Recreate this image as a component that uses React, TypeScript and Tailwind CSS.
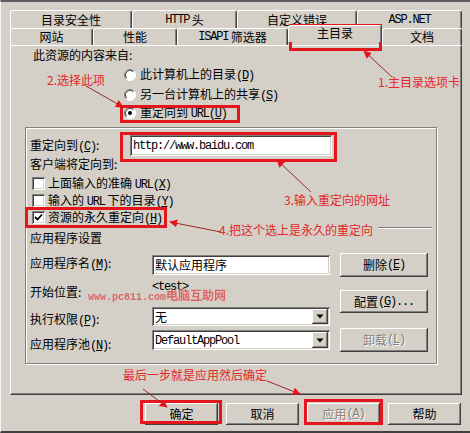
import React from 'react';

const raised =
  'bg-[#d4d0c8] shadow-[inset_-1px_-1px_0_#404040,inset_1px_1px_0_#ffffff,inset_-2px_-2px_0_#808080]';
const sunken =
  'bg-white shadow-[inset_1px_1px_0_#808080,inset_-1px_-1px_0_#ffffff,inset_2px_2px_0_#404040,inset_-2px_-2px_0_#d4d0c8]';
const mono = "font-['Liberation_Mono',monospace] text-[12px] tracking-[-1.2px]";
const tab =
  'h-full flex items-center justify-center rounded-t-[3px] border-t border-l border-r border-t-white border-l-white border-r-[#404040] shadow-[inset_-1px_0_0_#808080]';

function Key({ k }: { k: string }) {
  return (
    <span className={mono}>
      (<span className="underline">{k}</span>)
    </span>
  );
}

function Radio({ on }: { on?: boolean }) {
  return (
    <svg width="12" height="12" viewBox="0 0 12 12" className="shrink-0">
      <circle cx="6" cy="6" r="5.5" fill="#fff" />
      <path d="M9.9 2.1A5.5 5.5 0 0 0 2.1 9.9" stroke="#808080" fill="none" />
      <path d="M9.9 2.1A5.5 5.5 0 0 1 2.1 9.9" stroke="#ffffff" fill="none" />
      <path d="M9.2 2.8A4.5 4.5 0 0 0 2.8 9.2" stroke="#404040" fill="none" />
      {on && <circle cx="6" cy="6" r="2" fill="#000" />}
    </svg>
  );
}

function Check({ on }: { on?: boolean }) {
  return (
    <div className={`w-[13px] h-[13px] shrink-0 ${sunken} flex items-center justify-center`}>
      {on && (
        <svg width="9" height="9" viewBox="0 0 9 9">
          <path d="M1 4 L3.5 6.5 L8 1.5" stroke="#000" strokeWidth="1.8" fill="none" />
        </svg>
      )}
    </div>
  );
}

function Select({ children, h }: { children: React.ReactNode; h: string }) {
  return (
    <div className={`${h} w-[178px] ${sunken} flex items-center pl-[3px] pr-[2px]`}>
      <div className="flex-1">{children}</div>
      <div className={`w-[16px] h-[calc(100%-4px)] ${raised} flex items-center justify-center`}>
        <svg width="8" height="5" viewBox="0 0 8 5">
          <path d="M0.5 0.5 H7.5 L4 4.5z" fill="#000" />
        </svg>
      </div>
    </div>
  );
}

export default function App() {
  return (
    <div className="relative w-[470px] h-[433px] overflow-hidden bg-[#d4d0c8] font-['Noto_Sans_CJK_SC','Noto_Sans',sans-serif] text-[12px] leading-[14px] text-black">
      <div className="h-full border-t-2 border-t-[#5c5c5c] border-b-2 border-b-[#404040] border-l border-l-[#f4f4f4] pl-[9px] pr-[8px] pt-[8px]">
        {/* back tab row */}
        <div className="flex h-[18px]">
          <div className={`${tab} w-[122px]`}>目录安全性</div>
          <div className={`${tab} w-[105px]`}>
            <span className={mono}>HTTP</span>&nbsp;头
          </div>
          <div className={`${tab} w-[120px]`}>自定义错误</div>
          <div className={`${tab} w-[105px]`}>
            <span className={mono}>ASP.NET</span>
          </div>
        </div>
        {/* front tab row */}
        <div className="flex h-[17px] items-start">
          <div className={`${tab} w-[83px]`}>网站</div>
          <div className={`${tab} w-[84px]`}>性能</div>
          <div className={`${tab} w-[111px]`}>
            <span className={mono}>ISAPI</span>&nbsp;筛选器
          </div>
          <div className={`${tab} relative z-10 -mt-[3px] h-[22px] w-[94px] bg-[#d4d0c8] pb-[3px]`}>主目录</div>
          <div className={`${tab} w-[80px]`}>文档</div>
        </div>

        {/* panel */}
        <div className="h-[350px] border border-t-white border-l-white border-r-[#404040] border-b-[#404040] shadow-[inset_-1px_-1px_0_#808080]">
          <div className="ml-[22px] mt-[2px]">此资源的内容来自:</div>
          <div className="ml-[113px] mt-[4px] flex h-[18px] items-center gap-[4px]">
            <Radio />
            <span>
              此计算机上的目录<Key k="D" />
            </span>
          </div>
          <div className="ml-[113px] mt-[2px] flex h-[18px] items-center gap-[4px]">
            <Radio />
            <span>
              另一台计算机上的共享<Key k="S" />
            </span>
          </div>
          <div className="ml-[113px] flex h-[18px] items-center gap-[4px]">
            <Radio on />
            <span>
              重定向到&nbsp;<span className={mono}>URL</span>
              <Key k="U" />
            </span>
          </div>

          {/* redirect frame */}
          <div className="ml-[14px] mt-[5px] h-[237px] w-[412px] border border-[#808080] shadow-[inset_1px_1px_0_#ffffff,1px_1px_0_#ffffff]">
            <div className="mt-[7px] flex h-[21px] items-center">
              <div className="w-[104px] pl-[4px]">
                重定向到<Key k="C" />:
              </div>
              <div className={`h-[21px] w-[202px] ${sunken} flex items-center pl-[3px]`}>
                <span className={mono}>http://www.baidu.com</span>
              </div>
            </div>
            <div className="mt-[1px] pl-[4px]">客户端将定向到:</div>
            <div className="mt-[4px] flex h-[17px] items-center gap-[3px] pl-[6px]">
              <Check />
              <span>
                上面输入的准确&nbsp;<span className={mono}>URL</span>
                <Key k="X" />
              </span>
            </div>
            <div className="flex h-[17px] items-center gap-[3px] pl-[6px]">
              <Check />
              <span>
                输入的&nbsp;<span className={mono}>URL</span>&nbsp;下的目录<Key k="Y" />
              </span>
            </div>
            <div className="flex h-[17px] items-center gap-[3px] pl-[6px]">
              <Check on />
              <span>
                资源的永久重定向<Key k="H" />
              </span>
            </div>
            <div className="mt-[1px] ml-[352px] h-[2px] w-[54px] border-t border-b border-t-[#808080] border-b-white" />
            <div className="mt-[2px] pl-[4px]">应用程序设置</div>

            <div className="flex">
              <div className="flex w-[126px] flex-col pl-[4px]">
                <div className="mt-[11px]">
                  应用程序名<Key k="M" />:
                </div>
                <div className="mt-[13px]">开始位置:</div>
                <div className="mt-[13px]">
                  执行权限<Key k="P" />:
                </div>
                <div className="mt-[9px]">
                  应用程序池<Key k="N" />:
                </div>
              </div>
              <div className="flex w-[178px] flex-col">
                <div className={`mt-[10px] h-[20px] w-[178px] ${sunken} flex items-center pl-[3px]`}>默认应用程序</div>
                <div className={`mt-[5px] h-[14px] ${mono}`}>&lt;test&gt;</div>
                <div className="mt-[13px]">
                  <Select h="h-[19px]">无</Select>
                </div>
                <div className="mt-[4px]">
                  <Select h="h-[20px]">
                    <span className={mono}>DefaultAppPool</span>
                  </Select>
                </div>
              </div>
              <div className="ml-[10px] flex w-[88px] flex-col">
                <div className={`mt-[8px] h-[24px] ${raised} flex items-center justify-center`}>
                  删除<Key k="E" />
                </div>
                <div className={`mt-[13px] h-[23px] ${raised} flex items-center justify-center`}>
                  配置<Key k="G" />
                  <span className={mono}>...</span>
                </div>
                <div
                  className={`mt-[15px] h-[24px] ${raised} flex items-center justify-center text-[#808080] [text-shadow:1px_1px_0_#ffffff]`}
                >
                  卸载<Key k="L" />
                </div>
              </div>
            </div>
          </div>
        </div>

        {/* dialog buttons */}
        <div className="ml-[135px] mt-[8px] flex gap-[8px]">
          <div className={`h-[22px] w-[73px] ${raised} flex items-center justify-center`}>确定</div>
          <div className={`h-[22px] w-[73px] ${raised} flex items-center justify-center`}>取消</div>
          <div
            className={`h-[22px] w-[73px] ${raised} flex items-center justify-center text-[#808080] [text-shadow:1px_1px_0_#ffffff]`}
          >
            应用<Key k="A" />
          </div>
          <div className={`h-[22px] w-[73px] ${raised} flex items-center justify-center`}>帮助</div>
        </div>
      </div>

      {/* annotations */}
      <div className="pointer-events-none absolute inset-0 text-[12px] leading-[14px] text-[#e5252a]">
        <div className="absolute left-[289px] top-[24px] h-[27px] w-[93px] border-[3px] border-[#e3161b]" />
        <div className="absolute left-[120px] top-[105px] h-[18px] w-[120px] border-[3px] border-[#e3161b]" />
        <div className="absolute left-[120px] top-[132px] h-[30px] w-[217px] border-[3px] border-[#e3161b]" />
        <div className="absolute left-[25px] top-[207px] h-[21px] w-[142px] border-[3px] border-[#e3161b]" />
        <div className="absolute left-[140px] top-[400px] h-[24px] w-[82px] border-[3px] border-[#e3161b]" />
        <div className="absolute left-[304px] top-[399px] h-[26px] w-[79px] border-[3px] border-[#e3161b]" />

        <div className="absolute left-[378px] top-[75px]">1.主目录选项卡</div>
        <div className="absolute left-[47px] top-[73px]">2.选择此项</div>
        <div className="absolute left-[284px] top-[193px]">3.输入重定向的网址</div>
        <div className="absolute left-[219px] top-[223px]">4.把这个选上是永久的重定向</div>
        <div className="absolute left-[123px] top-[368px]">最后一步就是应用然后确定</div>
        <div className="absolute left-[88px] top-[288px] font-bold text-[#e04a4a] opacity-80">
          <span className="font-['Liberation_Mono',monospace] text-[10px]">www.pc811.com</span>电脑互助网
        </div>

        <svg className="absolute inset-0" width="470" height="433" viewBox="0 0 470 433">
          <defs>
            <marker id="ah" viewBox="0 0 10 10" refX="9" refY="5" markerWidth="8" markerHeight="8" orient="auto">
              <path d="M0 0L10 5L0 10z" fill="#e3161b" />
            </marker>
          </defs>
          <g stroke="#9a2a2a" strokeWidth="1" fill="none">
            <line x1="392" y1="77" x2="364" y2="51" markerEnd="url(#ah)" />
            <line x1="86" y1="86" x2="123" y2="107" markerEnd="url(#ah)" />
            <line x1="311" y1="192" x2="277" y2="160" markerEnd="url(#ah)" />
            <line x1="221" y1="232" x2="170" y2="222" markerEnd="url(#ah)" />
            <line x1="143" y1="389" x2="167" y2="407" markerEnd="url(#ah)" />
            <line x1="267" y1="381" x2="300" y2="394" markerEnd="url(#ah)" />
          </g>
        </svg>
      </div>
    </div>
  );
}
